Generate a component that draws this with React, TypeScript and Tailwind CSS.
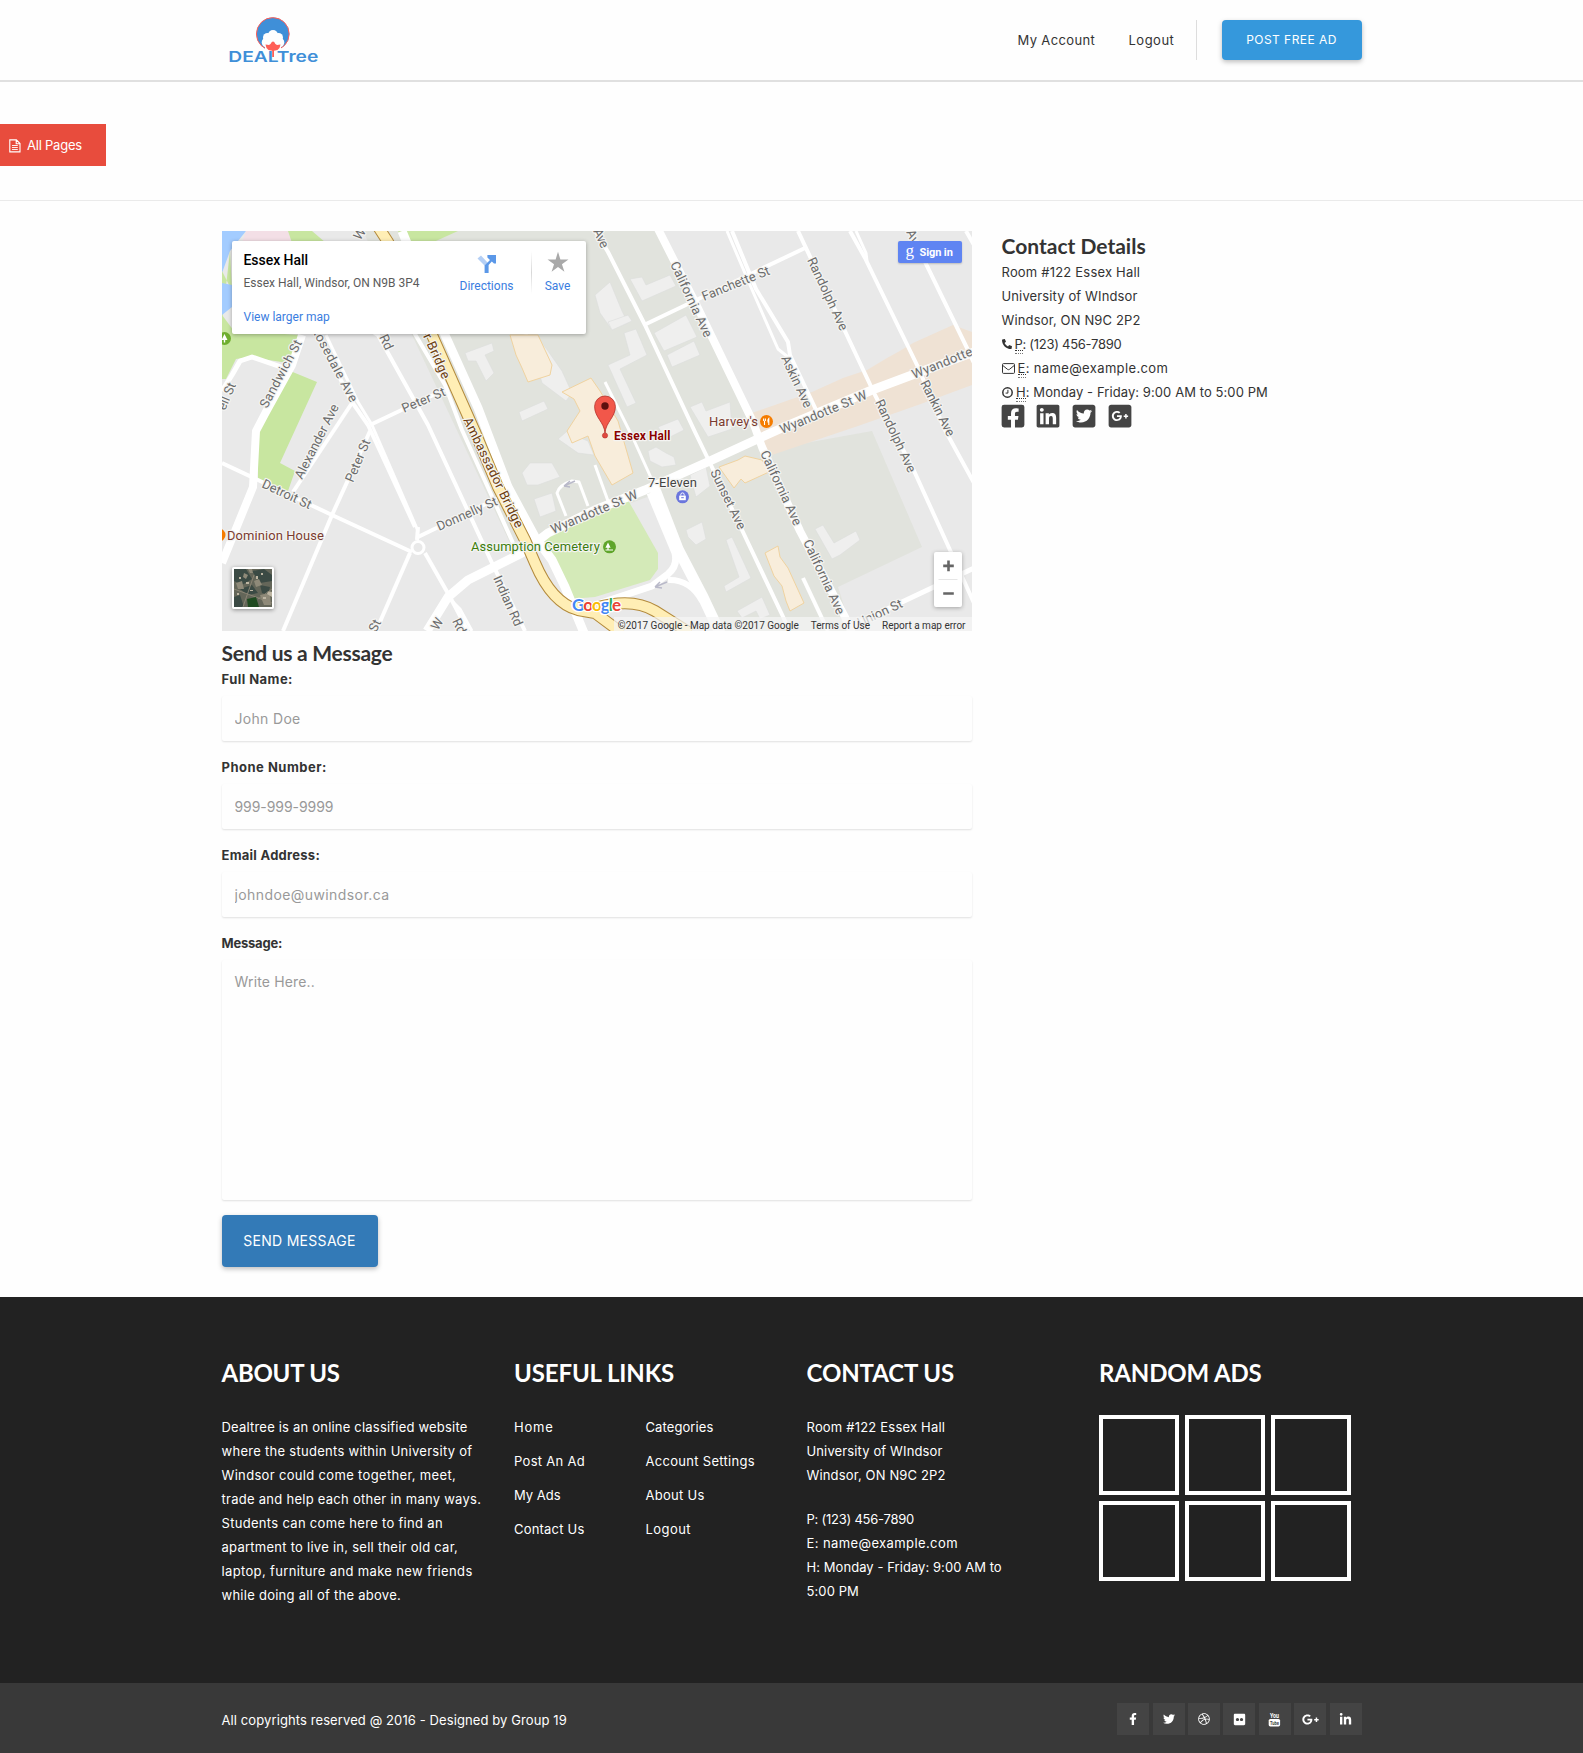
import React from "react";
import {
  FaPhoneAlt,
  FaFacebookSquare,
  FaLinkedin,
  FaTwitterSquare,
  FaGooglePlusSquare,
  FaFacebookF,
  FaTwitter,
  FaDribbble,
  FaFlickr,
  FaGooglePlusG,
  FaLinkedinIn,
} from "react-icons/fa";

/* ---------- Logo ---------- */

function Logo() {
  return (
    <svg width="92" height="50" viewBox="0 0 92 50" className="block">
      <circle cx="44.8" cy="19" r="16.4" fill="#3f8fd8" stroke="#ff5f57" strokeWidth="1" />
      <g fill="#fefefe">
        <circle cx="45" cy="20" r="5" />
        <circle cx="39.5" cy="22.5" r="4.5" />
        <circle cx="50.5" cy="22.5" r="4.5" />
        <circle cx="38.5" cy="27.5" r="4.8" />
        <circle cx="51.5" cy="27.5" r="4.8" />
        <rect x="37" y="22" width="16" height="14" />
      </g>
      <text
        x="0.3"
        y="46.6"
        fontFamily="Inter, sans-serif"
        fontSize="14.8"
        fontWeight="600"
        fill="#3f8fd8"
        textLength="90"
        lengthAdjust="spacingAndGlyphs"
      >
        DEALTree
      </text>
      <path
        d="M37.5 29.5 L41 30 L42.5 29 L43.8 27 L45 26.4 L46.2 27 L47.4 29 L49 30 L52.5 29.5 L51.5 33 L49.5 35 L46 35.8 L46 42 L44.2 42 L44.2 35.8 L40.5 35 L38.5 33 Z"
        fill="#ff5f57"
      />
    </svg>
  );
}

/* ---------- Map ---------- */

type Road = { d: string; w: number };

const roads: Road[] = [
  { d: "M96 104 L130 171 L146 194 L193 296", w: 4 },
  { d: "M104 104 L136 171 L150 194 L196 300", w: 3 },
  { d: "M196 296 L195 309", w: 4 },
  { d: "M140 94 L156 104 L206 194 L270 332 L303 400", w: 4 },
  { d: "M190 98 L223 154 L240 199 L291 312", w: 4 },
  { d: "M148 194 L226 157", w: 4 },
  { d: "M196 306 L276 267", w: 4 },
  { d: "M0 232 L36 249 L110 284 L190 321", w: 4 },
  { d: "M148 200 L126 249 L110 284 L61 400", w: 4 },
  { d: "M71 261 L130 172", w: 4 },
  { d: "M80 104 L70 134 L44 181 L34 200 L31 256 L0 332", w: 8 },
  { d: "M0 160 L10 144 L18 130 L30 126 L62 137", w: 5 },
  { d: "M188 322 L154 400", w: 4 },
  { d: "M203 322 L211 336 L228 366 L246 400", w: 4 },
  { d: "M226 366 L238 378 L250 400", w: 3 },
  { d: "M505 0 L528 54 L556 118 L566 126", w: 3 },
  { d: "M510 0 L534 58 L566 111 L568 124 L596 183", w: 4 },
  { d: "M422 94 L583 17", w: 4 },
  { d: "M366 -12 L386 21 L423 94 L473 201 L488 232 L520 299 L564 392", w: 4 },
  { d: "M576 0 L653 164 L693 242 L728 319 L752 372", w: 4 },
  { d: "M628 0 L643 27 L695 134 L723 199 L752 252", w: 4 },
  { d: "M634 0 L644 22 L645 30", w: 3 },
  { d: "M688 0 L745 117 L752 132", w: 4 },
  { d: "M744 0 L752 14", w: 4 },
  { d: "M632 394 L680 371 L752 337", w: 5 },
  { d: "M383 151 L406 197 L411 207 L430 249", w: 3 },
  { d: "M373 234 L386 270", w: 3 },
  { d: "M581 347 L606 400", w: 4 },
  { d: "M344 285 L335 262 Q337 254 350 250 L357 251 L366 275", w: 3 },
  { d: "M205 400 L226 366 L246 349 L300 322 L326 302 L373 279 L423 259 L490 229 L540 206 L560 197 L650 159 L690 144 L752 121", w: 9 },
  { d: "M435 -4 L473 71 L531 191 L540 216 L578 300 L623 386 L630 402", w: 8 },
  { d: "M428 262 L453 322 Q456 335 446 343 L430 355 L373 374", w: 7 },
  { d: "M446 349 Q468 348 480 370", w: 6 },
  { d: "M432 256 L456 318 L481 366 L498 402", w: 11 },
  { d: "M180 0 L223 104 L256 177 L286 256 L313 306 L330 329 L343 356 L362 402", w: 9 },
];

const lightBuildings = [
  "243,122 270,112 272,120 263,124 272,142 264,150 254,130 246,130",
  "292,106 306,102 320,152 344,170 350,162 340,140 326,120 314,104",
  "297,181 322,170 326,178 300,190",
  "300,242 308,232 330,232 338,246 316,254 305,254",
  "312,268 330,262 334,280 318,286",
  "336,208 350,196 356,206 366,210 372,224 356,222",
  "373,64 388,51 400,80 406,92 390,99 378,82",
  "386,91 406,84 410,90 390,99",
  "402,102 414,98 425,124 398,138 414,172 405,176 386,134 408,124",
  "408,48 420,46 424,54 448,44 454,55 420,70",
  "432,102 464,84 475,106 442,120",
  "445,124 472,110 478,124 450,136",
  "468,176 480,171 484,180 508,171 510,198 486,206",
  "436,196 456,188 462,199 444,208",
  "426,220 434,216 444,222 452,226 454,234 440,236 428,230",
  "468,244 484,236 488,255 474,266",
  "464,299 480,291 484,308 474,314 466,306",
  "504,309 510,306 529,347 504,361 502,355 517,346",
  "515,380 540,366 548,384 538,388 534,380 520,387",
  "593,298 601,294 612,312 634,300 638,309 618,324 610,328",
];

const beigeBuildings = [
  "288,104 316,104 330,134 328,144 306,151 300,137 294,124",
  "340,161 369,147 378,160 396,190 411,242 390,254 373,225 366,205 350,212 345,200 358,180 352,168",
  "497,236 516,229 523,225 540,229 547,241 523,252 519,248 512,257",
  "543,322 556,315 558,326 566,337 582,372 568,380 564,370 560,355 552,345",
];

function MapLabel({
  x,
  y,
  a = 0,
  len,
  children,
  fill = "#6b6b6b",
  size = 13,
  weight = 400,
}: {
  x: number;
  y: number;
  a?: number;
  len?: number;
  children: string;
  fill?: string;
  size?: number;
  weight?: number;
}) {
  return (
    <text
      transform={`translate(${x} ${y}) rotate(${a})`}
      fontSize={size}
      fontWeight={weight}
      fill={fill}
      textLength={len}
      stroke="#f4f4f2"
      strokeWidth="2.4"
      strokeLinejoin="round"
      paintOrder="stroke"
    >
      {children}
    </text>
  );
}

function MapCanvas() {
  return (
    <svg width="750" height="400" viewBox="0 0 750 400" className="block" fontFamily="Roboto, sans-serif">
      <rect width="750" height="400" fill="#e9e9e9" />
      <polygon points="140,-2 435,0 473,71 531,191 550,218 650,200 700,316 616,356 630,400 497,400 456,318 436,262 320,305 288,312 190,104" fill="#e1e3dd" />
      <polygon
        points="530,182 590,161 621,147 645,139 665,127 676,121 691,112 731,94 750,101 750,154 696,174 676,181 633,196 550,224 538,212"
        fill="#efe2d4"
      />
      <polygon points="0,0 24,0 8,20 0,42" fill="#a3ccff" />
      <polygon points="8,20 10,60 0,40 0,90" fill="#c8e6a0" />
      <polygon points="0,52 10,54 10,76 0,84" fill="#a3ccff" />
      <polygon points="24,0 66,0 70,12 20,12" fill="#f3dfe6" />
      <polygon points="66,0 90,0 104,12 70,12" fill="#c8e6a0" />
      <polygon points="176,0 236,0 205,14 182,14" fill="#c8e6a0" />
      <polygon points="0,84 12,100 80,104 66,132 28,126 14,128 4,148 0,148" fill="#c8e6a0" />
      <polygon points="61,137 95,151 58,232 73,240 66,260 36,249 36,199 43,176" fill="#c8e6a0" />
      <polygon points="406,269 436,322 436,338 428,349 373,366 348,368 320,305" fill="#d4eab8" />

      <g fill="#efefee" stroke="#dcdddb" strokeWidth="0.6">
        {lightBuildings.map((p) => (
          <polygon key={p} points={p} />
        ))}
      </g>
      <g fill="#f8eddb" stroke="#f0d3a0" strokeWidth="1">
        {beigeBuildings.map((p) => (
          <polygon key={p} points={p} />
        ))}
      </g>

      <g fill="none" stroke="#ffffff" strokeLinejoin="round">
        {roads.map((r) => (
          <path key={r.d} d={r.d} strokeWidth={r.w} />
        ))}
      </g>
      <circle cx="196" cy="316.5" r="6" fill="#e9e9e9" stroke="#fff" strokeWidth="3" />

      <g fill="none" strokeLinejoin="round">
        <g stroke="#b38a3c" strokeWidth="12">
          <path d="M155 -6 L166 11 L210 104 L253 201 L276 256 L303 309 L313 332 Q330 372 356 379 L373 382 L400 402" />
          <path d="M350 377 L373 377 Q410 366 433 380 L468 402" />
        </g>
        <g stroke="#ffeeb5" strokeWidth="10">
          <path d="M155 -6 L166 11 L210 104 L253 201 L276 256 L303 309 L313 332 Q330 372 356 379 L373 382 L400 402" />
          <path d="M350 377 L373 377 Q410 366 433 380 L468 402" />
        </g>
      </g>
      <g fill="none" stroke="#b9b9c9" strokeWidth="1.5">
        <path d="M342 255 L353 250 M342 255 L348 250 M342 255 L348 256" />
        <path d="M433 356 L445 351 M433 356 L438 351 M433 356 L440 357" />
      </g>

      <MapLabel x={138} y={10} a={-55}>W</MapLabel>
      <MapLabel x={371} y={0} a={65} len={20}>Ave</MapLabel>
      <MapLabel x={45} y={178} a={-62} len={75}>Sandwich St</MapLabel>
      <MapLabel x={89} y={98} a={62} len={84}>Rosedale Ave</MapLabel>
      <MapLabel x={157} y={106} a={65}>Rd</MapLabel>
      <MapLabel x={201} y={105} a={66} len={48} fill="#6d3d0c">r Bridge</MapLabel>
      <MapLabel x={182} y={182} a={-23} len={46}>Peter St</MapLabel>
      <MapLabel x={241} y={189} a={64} len={121} fill="#6d3d0c">Ambassador Bridge</MapLabel>
      <MapLabel x={3} y={180} a={-67}>ell St</MapLabel>
      <MapLabel x={80} y={249} a={-63} len={82}>Alexander Ave</MapLabel>
      <MapLabel x={131} y={252} a={-67} len={45}>Peter St</MapLabel>
      <MapLabel x={39} y={256} a={25} len={53}>Detroit St</MapLabel>
      <MapLabel x={217} y={300} a={-24} len={65}>Donnelly St</MapLabel>
      <MapLabel x={331} y={303} a={-23} len={93}>Wyandotte St W</MapLabel>
      <MapLabel x={271} y={347} a={66} len={54}>Indian Rd</MapLabel>
      <MapLabel x={230} y={390} a={65}>Rd</MapLabel>
      <MapLabel x={216} y={400} a={-60}>W</MapLabel>
      <MapLabel x={154} y={402} a={-63}>St</MapLabel>
      <MapLabel x={448} y={33} a={65} len={82}>California Ave</MapLabel>
      <MapLabel x={482} y={70} a={-22} len={72}>Fanchette St</MapLabel>
      <MapLabel x={585} y={29} a={65} len={79}>Randolph Ave</MapLabel>
      <MapLabel x={559} y={127} a={65} len={56}>Askin Ave</MapLabel>
      <MapLabel x={560} y={203} a={-22.5} len={93}>Wyandotte St W</MapLabel>
      <MapLabel x={692} y={148} a={-22} len={64}>Wyandotte</MapLabel>
      <MapLabel x={698} y={152} a={63} len={61}>Rankin Ave</MapLabel>
      <MapLabel x={653} y={171} a={65} len={79}>Randolph Ave</MapLabel>
      <MapLabel x={538} y={222} a={65} len={81}>California Ave</MapLabel>
      <MapLabel x={581} y={311} a={65} len={81}>California Ave</MapLabel>
      <MapLabel x={488} y={241} a={64} len={65}>Sunset Ave</MapLabel>
      <MapLabel x={638} y={396} a={-25} len={48}>Union St</MapLabel>
      <MapLabel x={684} y={1} a={65}>Av</MapLabel>

      <MapLabel x={426} y={255.5} len={49} fill="#444444">7-Eleven</MapLabel>
      <MapLabel x={487} y={195} len={49} fill="#7b3b30">Harvey's</MapLabel>
      <MapLabel x={5} y={309} len={97} fill="#7b3b30">Dominion House</MapLabel>
      <MapLabel x={249} y={320} len={129} fill="#3c7d0e">Assumption Cemetery</MapLabel>
      <MapLabel x={392} y={208.5} len={56.5} size={12} weight={700} fill="#8b0000">Essex Hall</MapLabel>

      <circle cx="-3" cy="304" r="6.5" fill="#f57c00" />
      <circle cx="2.5" cy="107.5" r="6.5" fill="#6fae2f" />
      <path d="M2.5 103 L5.5 109 L3.2 109 L3.2 111.5 L1.8 111.5 L1.8 109 L-0.5 109 Z" fill="#fff" />
      <circle cx="544.5" cy="190.5" r="6.5" fill="#f57c00" />
      <path d="M541.6 187.5 v2.6 M543.4 187.5 v2.6 M542.5 189.8 v4.2 M546.8 194 v-6.5 q-1.6 1.4 -0.6 4" stroke="#fff" strokeWidth="1.1" fill="none" />
      <circle cx="387.5" cy="315.8" r="6.5" fill="#5fa52a" />
      <path d="M386 311.5 L388.6 316.8 L386.6 316.8 L386.6 318.4 L391 318.4 L391 319.4 L383.5 319.4 L383.5 318.4 L385.4 318.4 L385.4 316.8 L383.4 316.8 Z" fill="#fff" />
      <circle cx="460.5" cy="265.8" r="6.5" fill="#6b76dd" />
      <rect x="457.2" y="264.6" width="6.6" height="4.6" fill="#fff" />
      <path d="M458.8 264.6 v-1 a1.7 1.7 0 0 1 3.4 0 v1" stroke="#fff" fill="none" />
      <rect x="459.2" y="266.2" width="2.6" height="1" fill="#6b76dd" />

      <path
        d="M383 202 C382.2 191 372.6 186.5 372.6 175.4 A10.4 10.4 0 0 1 393.4 175.4 C393.4 186.5 383.8 191 383 202 Z"
        fill="#f2574a"
        stroke="#b5302a"
        strokeWidth="0.8"
      />
      <circle cx="383" cy="175" r="3.7" fill="#5c100e" />
      <circle cx="383" cy="204.5" r="2.6" fill="#e0483e" stroke="#b5302a" strokeWidth="0.6" />

      <text x="350" y="380" fontFamily="Lato, sans-serif" fontSize="17" fontWeight="700" textLength="49" stroke="#fff" strokeWidth="2.5" paintOrder="stroke">
        <tspan fill="#4285f4">G</tspan>
        <tspan fill="#ea4335">o</tspan>
        <tspan fill="#fbbc05">o</tspan>
        <tspan fill="#4285f4">g</tspan>
        <tspan fill="#34a853">l</tspan>
        <tspan fill="#ea4335">e</tspan>
      </text>
    </svg>
  );
}

function SatelliteThumb() {
  return (
    <svg width="38" height="38" viewBox="0 0 38 38" className="block">
      <rect width="38" height="38" fill="#646659" />
      <g fill="#3b4a44">
        <polygon points="0,0 12,0 18,10 8,16 0,12" />
        <polygon points="18,2 30,0 38,6 38,12 26,14" />
        <polygon points="6,20 18,16 24,24 14,26" />
        <polygon points="26,16 36,18 34,26 28,24" />
        <polygon points="0,28 6,26 10,38 0,38" />
      </g>
      <g fill="#8f8a79">
        <polygon points="10,4 14,6 12,10 9,8" />
        <polygon points="2,14 8,12 10,20 4,20" />
        <polygon points="20,12 25,10 28,16 22,18" />
        <polygon points="26,26 36,24 37,36 30,36" />
        <polygon points="14,0 18,0 19,4 16,4" />
      </g>
      <g fill="#bdb5a2">
        <polygon points="34,22 38,23 38,28 33,25" />
        <rect x="29" y="28" width="3" height="2" />
        <rect x="12" y="13" width="3" height="2" />
        <rect x="22" y="7" width="2" height="3" />
        <rect x="5" y="8" width="2" height="2" />
        <rect x="27" y="4" width="2" height="2" />
        <rect x="16" y="21" width="3" height="1" />
        <rect x="3" y="24" width="2" height="2" />
      </g>
      <path d="M0 20 L38 34 M9 38 L20 6 M24 30 L38 20" stroke="#8e8877" strokeWidth="0.9" />
      <polygon points="13,30 22,28 25,38 14,38" fill="#1f4a20" />
    </svg>
  );
}

function MapWidget() {
  return (
    <div className="relative h-[400px] w-[750px] overflow-hidden font-[Roboto]">
      <MapCanvas />

      <div className="absolute left-[10px] top-[10px] flex h-[93px] w-[354px] rounded-[2px] bg-white pl-3 pt-[10px] shadow-[0_1px_4px_rgba(0,0,0,0.3)]">
        <div className="w-[204px] whitespace-nowrap text-xs">
          <div className="text-[14px] font-medium leading-[19px] tracking-[-0.04px] text-black">Essex Hall</div>
          <div className="mt-[4px] leading-[18px] text-[#5b5b5b]">Essex Hall, Windsor, ON N9B 3P4</div>
          <div className="mt-[16px] leading-[18px] text-[#3a7de0]">View larger map</div>
        </div>
        <div className="ml-[12px] flex w-[54px] flex-col items-center text-xs text-[#3a7de0]">
          <svg width="20" height="20" viewBox="0 0 20 20" className="mt-[3px]">
            <path d="M0.5 4.5 L4 1.5 L11 9 L11 12 L8 12 Z" fill="#b4cff5" />
            <path d="M7.6 19 V11.5 L13 6 L10.4 3.4 V1 H19 V9.4 H17 L14.8 7.4 L11.6 11 V19 Z" fill="#5b98e8" />
          </svg>
          <span className="mt-[3px] leading-[18px]">Directions</span>
        </div>
        <div className="ml-[17px] h-[43px] w-px bg-linear-to-b from-white via-[#d8d8d8] to-white" />
        <div className="ml-[12px] flex w-[28px] flex-col items-center text-xs text-[#3a7de0]">
          <svg width="22" height="22" viewBox="0 0 24 24">
            <path d="M12 0.8 L14.6 9.2 L23.4 9.2 L16.3 14.4 L19 22.6 L12 17.5 L5 22.6 L7.7 14.4 L0.6 9.2 L9.4 9.2 Z" fill="#a9a9a9" />
          </svg>
          <span className="mt-[4px] leading-[18px]">Save</span>
        </div>
      </div>

      <div className="absolute left-[676px] top-[10px] flex h-[22px] w-16 items-center rounded-[2px] bg-[#5f84f2] pl-2 text-white shadow-[0_1px_2px_rgba(0,0,0,0.2)]">
        <span className="-mt-1 w-[14px] font-['Liberation_Serif'] text-[17px] leading-none">g</span>
        <span className="whitespace-nowrap text-[11px] font-bold leading-none tracking-[-0.1px]">Sign in</span>
      </div>

      <div className="absolute left-[10px] top-[336px] rounded-[2px] border-2 border-white shadow-[0_1px_4px_rgba(0,0,0,0.4)]">
        <SatelliteThumb />
      </div>

      <div className="absolute left-[712px] top-[321px] flex h-[55px] w-7 flex-col items-center rounded-[2px] bg-white shadow-[0_1px_4px_rgba(0,0,0,0.3)]">
        <svg width="28" height="55" viewBox="0 0 28 55">
          <path d="M9.2 13.9 H19.8 M14.5 8.6 V19.2 M9.2 41.5 H19.8" stroke="#666" strokeWidth="2.6" />
          <path d="M4.5 27.5 H23.5" stroke="#e6e6e6" />
        </svg>
      </div>

      <div className="absolute bottom-0 right-0 flex h-[14px] items-center whitespace-nowrap bg-[#f5f5f5]/70 pl-[4px] pr-[6px] pt-[3px] text-[10px] leading-[11px] text-[#333]">
        <span className="mr-3">©2017 Google - Map data ©2017 Google</span>
        <span className="mr-3">Terms of Use</span>
        <span>Report a map error</span>
      </div>
    </div>
  );
}

/* ---------- Small icons ---------- */

function FileIcon() {
  return (
    <svg width="12" height="14" viewBox="0 0 12 14" className="block" fill="none" stroke="#fff">
      <path d="M0.8 0.9 H7.4 L11 4.5 V12.9 H0.8 Z M7.2 1 V4.7 H11" strokeWidth="1.1" />
      <path d="M3 6.5 H8.8 M3 8.5 H8.8 M3 10.5 H8.8" strokeWidth="0.9" />
    </svg>
  );
}

function EnvelopeIcon() {
  return (
    <svg width="13" height="11" viewBox="0 0 13 11" className="block" fill="none" stroke="#333">
      <rect x="0.5" y="0.6" width="12" height="9.8" rx="1" />
      <path d="M0.7 2.4 L5.6 6.4 Q6.5 7 7.4 6.4 L12.3 2.4" />
    </svg>
  );
}

function ClockIcon() {
  return (
    <svg width="11" height="11" viewBox="0 0 11 11" className="block" fill="none" stroke="#333">
      <circle cx="5.5" cy="5.5" r="4.7" strokeWidth="1.5" />
      <path d="M5.9 2.8 V6.1 H3.6" strokeWidth="1" />
    </svg>
  );
}

function YouTubeIcon() {
  return (
    <svg width="13" height="15" viewBox="0 0 13 15" className="block" fontFamily="Roboto, sans-serif" fontWeight="700">
      <text x="2" y="6" fontSize="6.6" fill="#fff" textLength="9" lengthAdjust="spacingAndGlyphs">You</text>
      <rect x="0.7" y="7" width="11.4" height="7.4" rx="1.6" fill="#fff" />
      <text x="2" y="13" fontSize="6" fill="#444" textLength="9" lengthAdjust="spacingAndGlyphs">Tube</text>
    </svg>
  );
}

/* ---------- Page pieces ---------- */

function Field({ label, placeholder, labelClass, inputClass }: { label: string; placeholder: string; labelClass: string; inputClass: string }) {
  return (
    <div className="mb-[14px]">
      <label className={`block text-[13px] font-bold leading-6 text-[#333] ${labelClass}`}>{label}</label>
      <input
        placeholder={placeholder}
        className={`mt-[5px] block h-[45px] w-full rounded-[2px] bg-[#fefefe] px-[13px] text-[14px] text-[#555] shadow-[0_1px_2px_rgba(0,0,0,0.12)] outline-none placeholder:text-[#999] ${inputClass}`}
      />
    </div>
  );
}

const aboutLines: [string, string][] = [
  ["Dealtree is an online classified website", "tracking-[0.2px]"],
  ["where the students within University of", "tracking-[0.28px]"],
  ["Windsor could come together, meet,", "tracking-[0.33px]"],
  ["trade and help each other in many ways.", "tracking-[0.27px]"],
  ["Students can come here to find an", "tracking-[0.31px]"],
  ["apartment to live in, sell their old car,", "tracking-[0.26px]"],
  ["laptop, furniture and make new friends", "tracking-[0.35px]"],
  ["while doing all of the above.", "tracking-[0.26px]"],
];

const linkCols: [string, string][][] = [
  [
    ["Home", "tracking-[0.8px]"],
    ["Post An Ad", "tracking-[0.3px]"],
    ["My Ads", "tracking-[0px]"],
    ["Contact Us", "tracking-[0.2px]"],
  ],
  [
    ["Categories", "tracking-[0.1px]"],
    ["Account Settings", "tracking-[0.3px]"],
    ["About Us", "tracking-[0.27px]"],
    ["Logout", "tracking-[0.45px]"],
  ],
];

function FooterHeading({ children, className }: { children: string; className: string }) {
  return <h3 className={`mb-[28px] whitespace-nowrap font-[Lato] text-2xl font-bold leading-[28px] ${className}`}>{children}</h3>;
}

function Abbr({ children }: { children: string }) {
  return (
    <span className="relative">
      {children}
      <span className="absolute left-0 right-0 top-[14px] border-b border-dotted border-[#333]" />
      <span className="absolute left-0 right-0 top-[17px] border-b border-dotted border-[#777]" />
    </span>
  );
}

const socials = [
  <FaFacebookF size={12} />,
  <FaTwitter size={12} />,
  <FaDribbble size={12} />,
  <FaFlickr size={13} />,
  <YouTubeIcon />,
  <FaGooglePlusG size={17} />,
  <FaLinkedinIn size={13} />,
];

export default function App() {
  return (
    <div className="h-[1753px] w-[1583px] bg-[#fefefe] font-[Inter] text-[13px] text-[#333]">
      <header className="h-[82px] border-b-2 border-[#e0e0e0]">
        <div className="mx-auto flex h-20 w-[1140px] items-center justify-between">
          <div className="ml-[6px] mt-[2px] self-start pt-[13px]">
            <Logo />
          </div>
          <nav className="flex items-center whitespace-nowrap">
            <a className="mr-[33px] mt-[2px] w-[79px] pl-px tracking-[0.36px]">My Account</a>
            <a className="mr-[21px] mt-[2px] w-[46px] tracking-[0.5px]">Logout</a>
            <span className="mr-[25px] h-10 w-px bg-[#ddd]" />
            <button className="h-10 w-[140px] rounded-[4px] bg-[#3598dc] pb-px text-xs tracking-[0.46px] text-white shadow-[0_2px_5px_rgba(0,0,0,0.26)]">
              POST FREE AD
            </button>
          </nav>
        </div>
      </header>

      <div className="h-[119px] border-b border-[#eaeaea] pt-[42px]">
        <div className="flex h-[42px] w-[106px] items-center bg-[#e84c3d] pl-[9px] pt-px text-white">
          <FileIcon />
          <span className="ml-[6px] mt-px whitespace-nowrap tracking-[-0.23px]">All Pages</span>
        </div>
      </div>

      <main className="mx-auto flex h-[1096px] w-[1140px] pt-[30px]">
        <section className="w-[750px]">
          <MapWidget />
          <h2 className="mt-[10px] font-[Lato] text-[21px] font-bold leading-6 tracking-[-0.27px]">Send us a Message</h2>
          <div className="mt-[2px]">
            <Field label="Full Name:" placeholder="John Doe" labelClass="tracking-[0.46px]" inputClass="tracking-[0.32px]" />
            <Field label="Phone Number:" placeholder="999-999-9999" labelClass="tracking-[0.5px]" inputClass="tracking-[-0.06px]" />
            <Field label="Email Address:" placeholder="johndoe@uwindsor.ca" labelClass="tracking-[0.26px]" inputClass="tracking-[0.41px]" />
            <label className="block font-bold leading-6 tracking-[-0.2px]">Message:</label>
            <textarea
              placeholder="Write Here.."
              className="mt-[5px] block h-[240px] w-full resize-none rounded-[2px] bg-[#fefefe] px-[13px] py-3 text-[14px] leading-5 tracking-[0.16px] shadow-[0_1px_2px_rgba(0,0,0,0.12)] outline-none placeholder:text-[#999]"
            />
            <button className="mt-[15px] block h-[52px] w-[156px] rounded-[4px] bg-[#337ab7] pb-[2px] text-[14px] tracking-[0.3px] text-white shadow-[0_2px_5px_rgba(0,0,0,0.26)]">
              SEND MESSAGE
            </button>
          </div>
        </section>

        <aside className="ml-[30px] whitespace-nowrap">
          <h2 className="mt-[3px] font-[Lato] text-[21px] font-bold leading-6">Contact Details</h2>
          <div className="mt-[2px] leading-6">
            <div className="tracking-[0.2px]">Room #122 Essex Hall</div>
            <div className="tracking-[0.13px]">University of WIndsor</div>
            <div className="tracking-[0.15px]">Windsor, ON N9C 2P2</div>
            <div className="flex items-center tracking-[-0.28px]">
              <FaPhoneAlt size={10} className="mr-[3px]" />
              <span><Abbr>P</Abbr>: (123) 456-7890</span>
            </div>
            <div className="flex items-center tracking-[0.36px]">
              <span className="mr-[3px]"><EnvelopeIcon /></span>
              <span><Abbr>E</Abbr>: name@example.com</span>
            </div>
            <div className="flex items-center tracking-[0.08px]">
              <span className="mr-[3.5px]"><ClockIcon /></span>
              <span><Abbr>H</Abbr>: Monday - Friday: 9:00 AM to 5:00 PM</span>
            </div>
          </div>
          <div className="-mt-px flex gap-[9.7px] text-[#444]">
            <FaFacebookSquare size={26} className="-ml-[2px]" />
            <FaLinkedin size={26} />
            <FaTwitterSquare size={26} />
            <FaGooglePlusSquare size={26} />
          </div>
        </aside>
      </main>

      <footer className="text-white">
        <div className="h-[386px] bg-[#222] pt-[62px]">
          <div className="mx-auto flex w-[1140px] whitespace-nowrap leading-6">
            <div className="w-[292.5px]">
              <FooterHeading className="tracking-[-0.25px]">ABOUT US</FooterHeading>
              {aboutLines.map(([t, c]) => (
                <div key={t} className={c}>{t}</div>
              ))}
            </div>
            <div className="w-[292.5px]">
              <FooterHeading className="tracking-[-0.12px]">USEFUL LINKS</FooterHeading>
              <div className="flex">
                {linkCols.map((col, i) => (
                  <ul key={i} className="w-[131.5px] space-y-[10px]">
                    {col.map(([t, c]) => (
                      <li key={t} className={c}>{t}</li>
                    ))}
                  </ul>
                ))}
              </div>
            </div>
            <div className="w-[292.5px]">
              <FooterHeading className="tracking-[-0.1px]">CONTACT US</FooterHeading>
              <div className="tracking-[0.2px]">Room #122 Essex Hall</div>
              <div className="tracking-[0.13px]">University of WIndsor</div>
              <div className="tracking-[0.15px]">Windsor, ON N9C 2P2</div>
              <div className="mt-5 tracking-[-0.24px]">P: (123) 456-7890</div>
              <div className="tracking-[0.4px]">E: name@example.com</div>
              <div className="tracking-[0.06px]">H: Monday - Friday: 9:00 AM to</div>
              <div className="tracking-[0.1px]">5:00 PM</div>
            </div>
            <div>
              <FooterHeading className="tracking-[-0.15px]">RANDOM ADS</FooterHeading>
              <div className="grid grid-cols-[80px_80px_80px] gap-[6px]">
                {[0, 1, 2, 3, 4, 5].map((i) => (
                  <div key={i} className="h-20 border-4 border-white" />
                ))}
              </div>
            </div>
          </div>
        </div>
        <div className="h-[70px] bg-[#393939]">
          <div className="mx-auto flex h-full w-[1140px] items-center justify-between">
            <span className="mt-[5px] tracking-[0.1px]">All copyrights reserved @ 2016 - Designed by Group 19</span>
            <div className="mt-[2px] flex gap-[3.4px]">
              {socials.map((icon, i) => (
                <span key={i} className="flex h-8 w-8 items-center justify-center bg-[#444]">{icon}</span>
              ))}
            </div>
          </div>
        </div>
      </footer>
    </div>
  );
}
